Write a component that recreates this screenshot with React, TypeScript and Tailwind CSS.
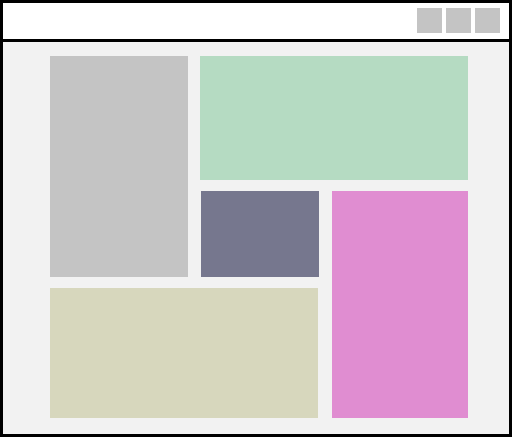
export default function App() {
  return (
    <div className="w-[512px] h-[437px] border-[3px] border-black bg-[#f2f2f2] flex flex-col box-border">
      <div className="h-[39px] shrink-0 bg-white border-b-[3px] border-black flex items-start justify-end pt-[5px] pr-[9px] gap-[4px] box-border">
        <div className="w-[25px] h-[25px] bg-[#c4c4c4]" />
        <div className="w-[25px] h-[25px] bg-[#c4c4c4]" />
        <div className="w-[25px] h-[25px] bg-[#c4c4c4]" />
      </div>
      <div className="flex-1 pl-[47px] pt-[14px]">
        <div className="grid grid-cols-[138px_12px_119px_13px_136px] grid-rows-[124px_11px_86px_11px_130px]">
          <div className="col-start-1 col-end-2 row-start-1 row-end-4 bg-[#c4c4c4]" />
          <div className="col-start-3 col-end-6 row-start-1 row-end-2 bg-[#b5dbc2]" />
          <div className="col-start-3 col-end-4 row-start-3 row-end-4 ml-[1px] bg-[#76778e]" />
          <div className="col-start-5 col-end-6 row-start-3 row-end-6 bg-[#e08dd1]" />
          <div className="col-start-1 col-end-4 row-start-5 row-end-6 mr-[1px] bg-[#d7d7bd]" />
        </div>
      </div>
    </div>
  );
}
